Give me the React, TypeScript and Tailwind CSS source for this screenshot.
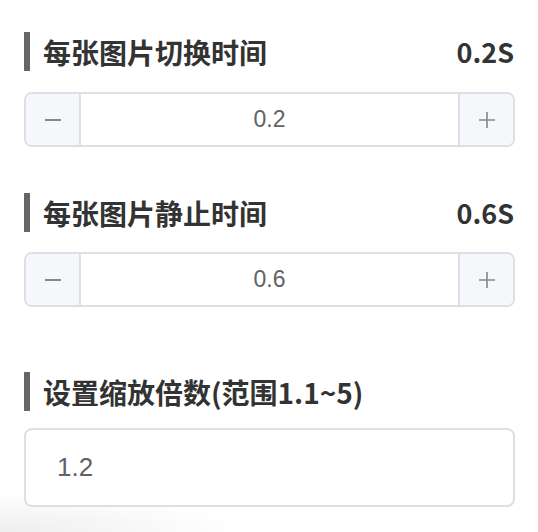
import React from "react";

const cjk = { fontFamily: '"Noto Sans CJK SC", "Noto Sans", sans-serif' };
const latin = { fontFamily: '"Liberation Sans", Arial, sans-serif' };

function Title({ text, value }: { text: string; value?: string }) {
  return (
    <div className="flex h-[39px] items-center justify-between">
      <div className="flex h-full items-center">
        <div className="h-[39px] w-[6px] bg-[#666666]" />
        <span className="ml-[13px] text-[28px] font-bold leading-none text-[#333333]" style={cjk}>
          {text}
        </span>
      </div>
      {value && (
        <span className="pr-[1px] text-[27px] font-bold leading-none text-[#333333]" style={cjk}>
          {value}
        </span>
      )}
    </div>
  );
}

function Stepper({ value }: { value: string }) {
  return (
    <div className="flex h-[55px] overflow-hidden rounded-[8px] border-2 border-[#dcdfe6] bg-white">
      <div className="flex w-[55px] items-center justify-center border-r-2 border-[#dcdfe6] bg-[#f5f7fa]">
        <svg width="18" height="18" viewBox="0 0 18 18">
          <line x1="1" y1="9" x2="17" y2="9" stroke="#85878b" strokeWidth="2" />
        </svg>
      </div>
      <div className="flex flex-1 items-center justify-center text-[23px] text-[#606266]" style={latin}>
        {value}
      </div>
      <div className="flex w-[55px] items-center justify-center border-l-2 border-[#dcdfe6] bg-[#f5f7fa]">
        <svg width="18" height="18" viewBox="0 0 18 18">
          <line x1="1" y1="9" x2="17" y2="9" stroke="#85878b" strokeWidth="1.6" />
          <line x1="9" y1="1" x2="9" y2="17" stroke="#85878b" strokeWidth="1.6" />
        </svg>
      </div>
    </div>
  );
}

export default function App() {
  return (
    <div className="h-[532px] w-full overflow-hidden bg-white bg-[radial-gradient(ellipse_45%_40px_at_0%_100%,#eeeeee,#ffffff)] pl-[24px] pr-[23px] pt-[32px]">
      <Title text="每张图片切换时间" value="0.2S" />
      <div className="mt-[21px]">
        <Stepper value="0.2" />
      </div>
      <div className="mt-[46px]">
        <Title text="每张图片静止时间" value="0.6S" />
      </div>
      <div className="mt-[20px]">
        <Stepper value="0.6" />
      </div>
      <div className="mt-[65px]">
        <Title text="设置缩放倍数(范围1.1~5)" />
      </div>
      <div className="mt-[17px] flex h-[79px] items-center rounded-[8px] border-2 border-[#dcdfe6] bg-white pl-[31px]">
        <span className="text-[26px] text-[#606266]" style={latin}>
          1.2
        </span>
      </div>
    </div>
  );
}
